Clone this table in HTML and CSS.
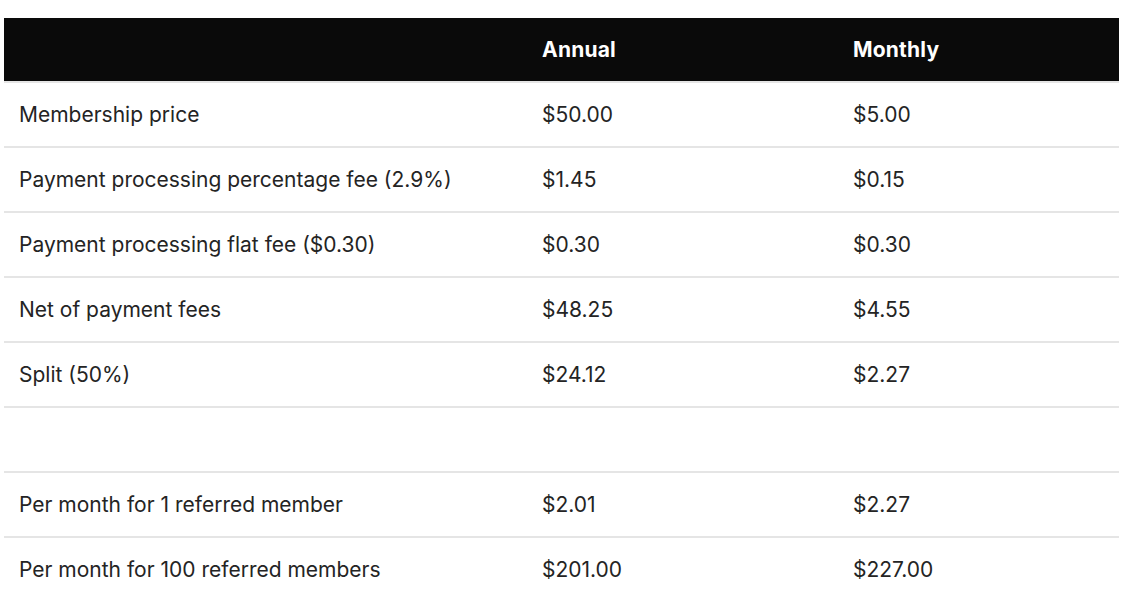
FILE: index.html
```html
<!DOCTYPE html>
<html>
<head>
<meta charset="utf-8">
<link rel="stylesheet" href="styles.css">
</head>
<body>
<table class="fees">
  <colgroup>
    <col class="c1"><col class="c2"><col class="c3">
  </colgroup>
  <thead>
    <tr><th></th><th>Annual</th><th>Monthly</th></tr>
  </thead>
  <tbody>
    <tr><td>Membership price</td><td>$50.00</td><td>$5.00</td></tr>
    <tr><td>Payment processing percentage fee (2.9%)</td><td>$1.45</td><td>$0.15</td></tr>
    <tr><td>Payment processing flat fee ($0.30)</td><td>$0.30</td><td>$0.30</td></tr>
    <tr><td>Net of payment fees</td><td>$48.25</td><td>$4.55</td></tr>
    <tr><td>Split (50%)</td><td>$24.12</td><td>$2.27</td></tr>
    <tr><td></td><td></td><td></td></tr>
    <tr><td>Per month for 1 referred member</td><td>$2.01</td><td>$2.27</td></tr>
    <tr class="last"><td>Per month for 100 referred members</td><td>$201.00</td><td>$227.00</td></tr>
  </tbody>
</table>
</body>
</html>
```
FILE: styles.css
```css
html, body { margin: 0; padding: 0; background: #fff; }
body { padding: 18px 8px 0 4px; font-family: Inter, "Liberation Sans", sans-serif; color: #242424; }
.fees { width: 1115px; border-collapse: collapse; table-layout: fixed; font-size: 21px; }
.c1 { width: 523px; }
.c2 { width: 311px; }
.c3 { width: 281px; }
.fees th { background: #0a0a0a; color: #fff; font-weight: 700; text-align: left; height: 63px; padding: 0 15px; border-bottom: 2px solid #e5e5e5; letter-spacing: 0.2px; }
.fees td { height: 63px; padding: 0 15px; border-bottom: 2px solid #e5e5e5; }
.fees tr.last td { border-bottom: none; }
```
